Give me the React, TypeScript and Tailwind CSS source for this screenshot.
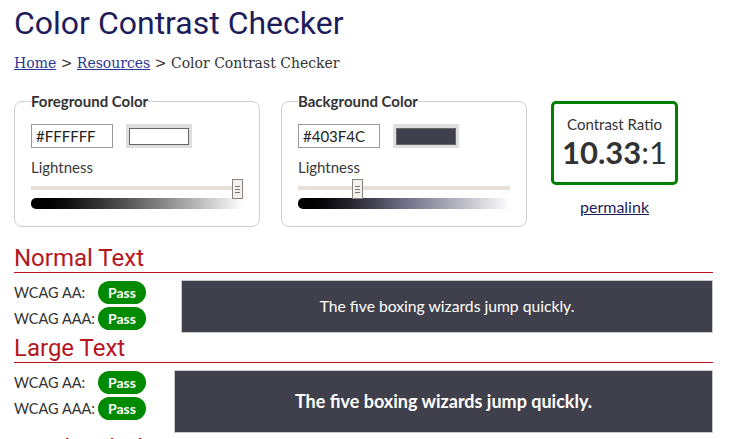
const body = { fontFamily: "Lato, 'Noto Sans', sans-serif" };

function ColorFieldset({
  label,
  hex,
  swatch,
  thumbLeft,
  gradient,
}: {
  label: string;
  hex: string;
  swatch: string;
  thumbLeft: string;
  gradient: string;
}) {
  return (
    <fieldset className="relative w-[245px] rounded-lg border border-[#cfcfcf] px-4 pb-[17px] pt-0">
      <legend className="px-0 text-[15px] font-bold leading-[18px] text-[#333]">{label}</legend>
      <div className="mt-[14px] flex items-center gap-[13px]">
        <div className="flex h-[24px] w-[82px] items-center border border-[#999] px-[4px] text-[15px] text-[#222]">
          {hex}
        </div>
        <div className="flex h-[24px] w-[66px] items-center justify-center bg-[#dedede]">
          <div className={`h-[17px] w-[60px] border border-[#666] ${swatch}`} />
        </div>
      </div>
      <p className="mt-[9px] text-[15px] leading-[20px] text-[#3a3a3a]">Lightness</p>
      <div className="relative mt-[2px] h-[30px] w-[212px]">
        <div className="absolute left-0 right-0 top-[7px] h-[4px] bg-[#e4dfd9]" />
        <div className={`absolute bottom-0 left-0 right-0 h-[11px] rounded-l-[5px] ${gradient}`} />
        <div
          className="absolute top-[0px] flex h-[20px] w-[11px] flex-col items-center justify-center gap-[2px] border border-[#8a8480] bg-[#f2efec]"
          style={{ left: thumbLeft }}
        >
          <span className="h-px w-[5px] bg-[#777]" />
          <span className="h-px w-[5px] bg-[#777]" />
          <span className="h-px w-[5px] bg-[#777]" />
        </div>
      </div>
    </fieldset>
  );
}

function Pass() {
  return (
    <span className="inline-flex h-[23px] w-[48px] items-center justify-center rounded-full bg-[#008a00] text-[14px] font-bold text-white">
      Pass
    </span>
  );
}

const headingFont = { fontFamily: "Roboto, sans-serif" };

function Section({ title, large }: { title: string; large?: boolean }) {
  return (
    <section>
      <h2
        className="border-b border-[#b5161e] pb-[1px] text-[24px] leading-[26px] text-[#b5161e]"
        style={headingFont}
      >
        {title}
      </h2>
      <div className="mt-[7px] flex">
        <div className="flex flex-col gap-[3px] pt-[1px]">
          {["WCAG AA:", "WCAG AAA:"].map((l) => (
            <div key={l} className="flex items-center">
              <span className="w-[84px] text-[14.5px] text-[#333]">{l}</span>
              <Pass />
            </div>
          ))}
        </div>
        <div
          className={`flex items-center justify-center border border-[#c9c9c9] bg-[#403F4C] text-white ${
            large
              ? "ml-[28px] h-[63px] flex-1 text-[18px] font-bold"
              : "ml-[35px] h-[53px] flex-1 text-[15.7px]"
          }`}
        >
          The five boxing wizards jump quickly.
        </div>
      </div>
    </section>
  );
}

export default function App() {
  return (
    <div className="h-[439px] w-[731px] overflow-hidden bg-white pl-[14px] pr-[18px]" style={body}>
      <h1 className="pt-[4px] text-[32px] leading-[38px] text-[#1d1d5c]" style={headingFont}>
        Color Contrast Checker
      </h1>
      <p className="mt-[11px] text-[14px] text-[#333]" style={{ fontFamily: "'DejaVu Serif', serif" }}>
        <a className="text-[#2a3590] underline">Home</a> &gt;{" "}
        <a className="text-[#2a3590] underline">Resources</a> &gt; Color Contrast Checker
      </p>

      <div className="mt-[18px] flex items-start">
        <ColorFieldset
          label="Foreground Color"
          hex="#FFFFFF"
          swatch="bg-white"
          thumbLeft="201px"
          gradient="bg-gradient-to-r from-black to-white"
        />
        <div className="ml-[21px]">
          <ColorFieldset
            label="Background Color"
            hex="#403F4C"
            swatch="bg-[#403F4C]"
            thumbLeft="54px"
            gradient="bg-gradient-to-r from-black via-[#706e85] to-white"
          />
        </div>
        <div className="ml-[24px] mt-[9px] flex flex-col items-center">
          <div className="flex h-[84px] w-[127px] flex-col items-center justify-center rounded-[5px] border-[3px] border-[#008000] text-[#333]">
            <span className="text-[15px] leading-[18px]">Contrast Ratio</span>
            <span className="text-[31px] leading-[38px]">
              <b>10.33</b>:1
            </span>
          </div>
          <a className="mt-[10px] text-[16px] text-[#1d1d5c] underline">permalink</a>
        </div>
      </div>

      <div className="mt-[18px] flex flex-col gap-[2px]">
        <Section title="Normal Text" />
        <Section title="Large Text" large />
        <h2 className="text-[24px] leading-[26px] text-[#b5161e]" style={headingFont}>
          Graphical Objects
        </h2>
      </div>
    </div>
  );
}
